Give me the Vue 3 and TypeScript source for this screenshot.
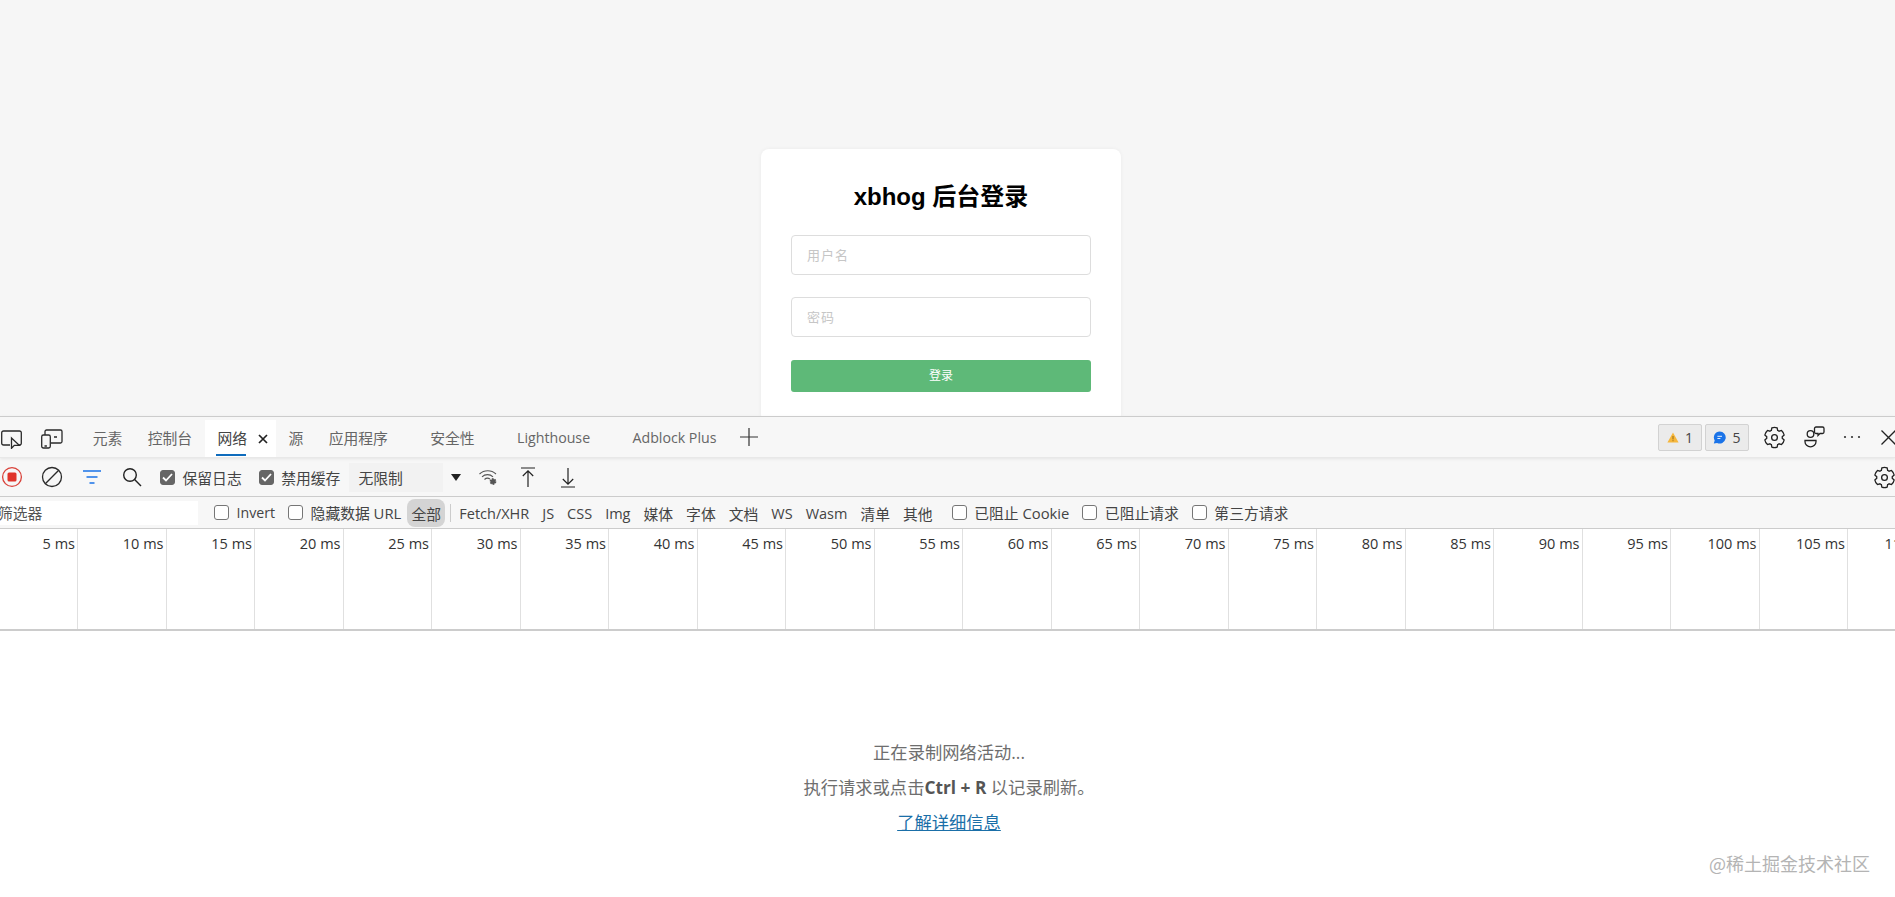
<script setup lang="ts">
const tabs = [
  { label: '元素' },
  { label: '控制台' },
  { label: '网络', active: true },
  { label: '源' },
  { label: '应用程序', spaced: true },
  { label: '安全性', spaced: true },
  { label: 'Lighthouse', spaced: true },
  { label: 'Adblock Plus' },
]
const chips = ['Fetch/XHR', 'JS', 'CSS', 'Img', '媒体', '字体', '文档', 'WS', 'Wasm', '清单', '其他']
const ticks = Array.from({ length: 22 }, (_, i) => `${(i + 1) * 5} ms`)
const isLatin = (s: string): boolean => /^[\x20-\x7e]+$/.test(s)

function gearPath(): string {
  const cx = 12, cy = 12, teeth = 6
  const pts: string[] = []
  for (let i = 0; i < teeth; i++) {
    const a = (i / teeth) * Math.PI * 2 - Math.PI / 2
    const step = (Math.PI * 2) / teeth
    const p = (r: number, o: number) => `${(cx + r * Math.cos(a + o)).toFixed(2)} ${(cy + r * Math.sin(a + o)).toFixed(2)}`
    pts.push(`${i === 0 ? 'M' : 'L'}${p(10.4, -0.27)}`)
    pts.push(`Q${p(11, 0)} ${p(10.4, 0.27)}`)
    pts.push(`L${p(8.1, 0.42)}`)
    pts.push(`Q${p(8.2, step / 2)} ${p(8.1, step - 0.42)}`)
  }
  return pts.join(' ') + ' Z'
}
const gear = gearPath()
</script>

<template>
  <div class="page">
    <section class="site">
      <div class="card">
        <h2 class="title">xbhog 后台登录</h2>
        <div class="fields">
          <input class="field" type="text" placeholder="用户名" />
          <input class="field" type="password" placeholder="密码" />
        </div>
        <button class="submit" type="button">登录</button>
      </div>
    </section>

    <section class="devtools">
      <header class="tabbar">
        <button class="slot" type="button" aria-label="检查">
          <svg width="24" height="24" viewBox="0 0 24 24" fill="none" stroke="#2a2a2a" stroke-width="1.3">
            <path d="M10 20H3.500A1.800 1.800 0 0 1 1.700 18.200V7.800A1.800 1.800 0 0 1 3.500 6h16a1.800 1.800 0 0 1 1.800 1.800v10.400a1.800 1.800 0 0 1-1.800 1.800H19" />
            <path d="M11.500 13v10.300l2.800-3h5z" fill="#f7f7f7" />
          </svg>
        </button>
        <button class="slot" type="button" aria-label="设备">
          <svg width="24" height="24" viewBox="0 0 24 24" fill="none" stroke="#2a2a2a" stroke-width="1.3">
            <path d="M5 10V6.500A1.500 1.500 0 0 1 6.500 5h14A1.500 1.500 0 0 1 22 6.500v10a1.500 1.500 0 0 1-1.500 1.500H11" />
            <rect x="1.700" y="10" width="8.600" height="13" rx="1.700" />
            <path d="M4.500 21h2.400M14 12h3" />
          </svg>
        </button>
        <nav class="tabs">
          <div v-for="t in tabs" :key="t.label" class="tab" :class="{ active: t.active, spaced: t.spaced, latin: isLatin(t.label) }">
            <span class="tab-label">{{ t.label }}</span>
            <svg v-if="t.active" class="tab-close" width="10" height="10" viewBox="0 0 10 10" stroke="#222" stroke-width="1.7">
              <path d="M1 1l8 8M9 1l-8 8" />
            </svg>
          </div>
          <svg class="plus" width="18" height="18" viewBox="0 0 18 18" stroke="#333" stroke-width="1.2">
            <path d="M9 0v18M0 9h18" />
          </svg>
        </nav>
        <div class="tab-right">
          <span class="badge">
            <svg width="12" height="11" viewBox="0 0 12 11"><path d="M6 .5l5.600 10H.4z" fill="#f6b73c" /><path d="M6 4v3.400M6 8.200v1" stroke="#8a6212" stroke-width=".9" /></svg>
            1
          </span>
          <span class="badge">
            <svg width="13" height="13" viewBox="0 0 13 13"><path d="M6.700.5a6 6 0 1 1-2.600 11.400L.8 12.600l.9-3A6 6 0 0 1 6.700.5z" fill="#1a73e8" /><path d="M4.400 5.300h4.600M4.400 7.500h3" stroke="#fff" stroke-width=".9" /></svg>
            5
          </span>
          <button class="slot" type="button" aria-label="设置">
            <svg width="23" height="23" viewBox="0 0 24 24" fill="none" stroke="#222" stroke-width="1.4"><path :d="gear" /><circle cx="12" cy="12" r="3" /></svg>
          </button>
          <button class="slot" type="button" aria-label="反馈">
            <svg width="22" height="22" viewBox="0 0 22 22" fill="none" stroke="#222" stroke-width="1.3">
              <circle cx="7.500" cy="8" r="3.300" />
              <path d="M2 14.500h11v1.300a5.500 5 0 0 1-11 0z" />
              <path d="M13 1h6.500A1.500 1.500 0 0 1 21 2.500v3.500A1.500 1.500 0 0 1 19.500 7.500h-2.500l-2 2v-2H13A1.500 1.500 0 0 1 11.500 6V2.500A1.500 1.500 0 0 1 13 1z" fill="#f7f7f7" />
            </svg>
          </button>
          <button class="slot narrow" type="button" aria-label="更多">
            <svg width="20" height="4" viewBox="0 0 20 4" fill="#333"><circle cx="3" cy="2" r="1.100" /><circle cx="10" cy="2" r="1.100" /><circle cx="17" cy="2" r="1.100" /></svg>
          </button>
          <button class="slot narrow" type="button" aria-label="关闭">
            <svg width="15" height="15" viewBox="0 0 15 15" stroke="#222" stroke-width="1.300"><path d="M.5.500l14 14M14.500.500l-14 14" /></svg>
          </button>
        </div>
      </header>

      <div class="toolbar">
        <button class="slot first" type="button" aria-label="录制">
          <svg width="22" height="22" viewBox="0 0 22 22" fill="none">
            <circle cx="11" cy="11" r="9.400" stroke="#d9423a" stroke-width="1.300" />
            <rect x="6.500" y="6.500" width="9" height="9" rx="1.500" fill="#e0342b" />
          </svg>
        </button>
        <button class="slot" type="button" aria-label="清除">
          <svg width="22" height="22" viewBox="0 0 22 22" fill="none" stroke="#2a2a2a" stroke-width="1.300">
            <circle cx="11" cy="11" r="9.500" /><path d="M4.300 17.700L17.700 4.300" />
          </svg>
        </button>
        <button class="slot" type="button" aria-label="筛选">
          <svg width="18" height="14" viewBox="0 0 18 14" stroke="#1a73e8" stroke-width="1.300"><path d="M0 1h18M3.500 7h11M6.500 13h5" /></svg>
        </button>
        <button class="slot" type="button" aria-label="搜索">
          <svg width="20" height="20" viewBox="0 0 20 20" fill="none" stroke="#222" stroke-width="1.400"><circle cx="8" cy="8" r="6.300" /><path d="M12.600 12.600L19 19" /></svg>
        </button>
        <label class="check lead">
          <span class="box on"><svg width="11" height="9" viewBox="0 0 11 9" fill="none" stroke="#fff" stroke-width="1.800"><path d="M1 4.500l3 3L10 1" /></svg></span>
          <span>保留日志</span>
        </label>
        <label class="check">
          <span class="box on"><svg width="11" height="9" viewBox="0 0 11 9" fill="none" stroke="#fff" stroke-width="1.800"><path d="M1 4.500l3 3L10 1" /></svg></span>
          <span>禁用缓存</span>
        </label>
        <div class="throttle">无限制</div>
        <span class="caret"></span>
        <button class="slot" type="button" aria-label="网络条件">
          <svg width="20" height="18" viewBox="0 0 20 18" fill="none" stroke="#555" stroke-width="1.100">
            <path d="M1.500 6a12 12 0 0 1 16.500 0M4 8.800a8 8 0 0 1 11 0M6.500 11.500a4.500 4.500 0 0 1 5.500-.5" />
            <circle cx="15" cy="13.500" r="2.500" fill="#555" stroke="#555" stroke-width="1.800" stroke-dasharray="1.600 1" />
          </svg>
        </button>
        <button class="slot" type="button" aria-label="导入">
          <svg width="16" height="21" viewBox="0 0 16 21" fill="none" stroke="#222" stroke-width="1.200"><path d="M1 1h14M8 20V4M2.800 9L8 3.800 13.200 9" /></svg>
        </button>
        <button class="slot" type="button" aria-label="导出">
          <svg width="16" height="21" viewBox="0 0 16 21" fill="none" stroke="#222" stroke-width="1.200"><path d="M1 20h14M8 1v16M2.800 12L8 17.200 13.200 12" /></svg>
        </button>
        <button class="slot end" type="button" aria-label="网络设置">
          <svg width="23" height="23" viewBox="0 0 24 24" fill="none" stroke="#222" stroke-width="1.400"><path :d="gear" /><circle cx="12" cy="12" r="3" /></svg>
        </button>
      </div>

      <div class="filters">
        <div class="filter-box">筛选器</div>
        <label class="check lead-f"><span class="box"></span><span class="latin">Invert</span></label>
        <label class="check"><span class="box"></span><span>隐藏数据 URL</span></label>
        <span class="pill">全部</span>
        <span class="sep"></span>
        <span v-for="c in chips" :key="c" class="chip" :class="{ latin: isLatin(c) }">{{ c }}</span>
        <label class="check lead-c"><span class="box"></span><span>已阻止 Cookie</span></label>
        <label class="check"><span class="box"></span><span>已阻止请求</span></label>
        <label class="check"><span class="box"></span><span>第三方请求</span></label>
      </div>

      <div class="timeline">
        <div v-for="t in ticks" :key="t" class="tick">{{ t }}</div>
      </div>

      <div class="empty">
        <p>正在录制网络活动...</p>
        <p>执行请求或点击<b>Ctrl + R</b> 以记录刷新。</p>
        <a class="more" href="#">了解详细信息</a>
      </div>
      <div class="watermark">@稀土掘金技术社区</div>
    </section>
  </div>
</template>

<style scoped>
.page {
  position: relative;
  width: 1895px;
  height: 897px;
  overflow: hidden;
  display: flex;
  flex-direction: column;
  background: #fff;
  font-family: "Open Sans", "Noto Sans CJK SC", sans-serif;
}
.site {
  box-sizing: border-box;
  flex: 0 0 416px;
  height: 416px;
  padding-right: 13px;
  overflow: hidden;
  background: #f6f6f6;
  display: flex;
  justify-content: center;
  align-items: flex-start;
}
.card {
  box-sizing: border-box;
  width: 360px;
  margin-top: 149px;
  padding: 30px;
  background: #fff;
  border-radius: 8px;
  box-shadow: 0 0 4px rgba(0, 0, 0, 0.05);
}
.title {
  margin: 0 0 20px;
  height: 36px;
  font: bold 24px/36px "Liberation Sans", "Noto Sans CJK SC", sans-serif;
  color: #000;
  text-align: center;
}
.fields {
  display: flex;
  flex-direction: column;
  gap: 22px;
}
.field {
  box-sizing: border-box;
  width: 300px;
  height: 40px;
  padding: 0 15px 2px;
  border: 1px solid #ddd;
  border-radius: 4px;
  background: #fff;
  font: 13px "Noto Sans CJK SC", sans-serif;
  letter-spacing: 1px;
  outline: none;
}
.field::placeholder {
  color: #c6c6c6;
}
.submit {
  display: block;
  width: 300px;
  height: 32px;
  margin-top: 23px;
  padding: 0 0 3px;
  border: 0;
  border-radius: 3px;
  background: #5eb978;
  color: #fff;
  font: 12px "Noto Sans CJK SC", sans-serif;
}

.devtools {
  flex: 1;
  display: flex;
  flex-direction: column;
  min-height: 0;
  font-size: 14.8px;
  color: #444;
}
.latin {
  font-size: 14.2px;
}
.slot {
  flex: 0 0 40px;
  width: 40px;
  height: 100%;
  padding: 0;
  border: 0;
  background: none;
  display: flex;
  align-items: center;
  justify-content: center;
}
.slot.narrow {
  flex-basis: 36px;
  width: 36px;
}
.tabbar {
  box-sizing: border-box;
  flex: 0 0 42px;
  display: flex;
  align-items: stretch;
  border-top: 1px solid #ccc;
  border-bottom: 1px solid #e8e8e8;
  background: #f7f7f7;
  box-shadow: 0 1px 3px rgba(0, 0, 0, 0.08);
  position: relative;
  z-index: 1;
}
.tabbar > .slot:first-child {
  margin-left: -8px;
}
.tabs {
  display: flex;
  align-items: stretch;
  margin-left: 8px;
}
.tab {
  position: relative;
  display: flex;
  align-items: center;
  padding: 0 12.7px;
  color: #666;
}
.tab.spaced {
  margin-right: 17px;
}
.tab.active {
  background: #fff;
  color: #444;
  margin: 3px 0 0;
}
.tab.active .tab-label {
  position: relative;
  align-self: stretch;
  display: flex;
  align-items: center;
  margin-top: -3px;
}
.tab.active .tab-label::after {
  content: "";
  position: absolute;
  left: -1px;
  right: 1px;
  bottom: 1px;
  height: 2px;
  background: #0f6cbd;
}
.tab-close {
  margin-left: 11px;
  margin-right: -5px;
}
.plus {
  align-self: center;
  margin-left: 11px;
}
.tab-right {
  margin-left: auto;
  margin-right: -11px;
  display: flex;
  align-items: center;
  height: 100%;
}
.badge {
  box-sizing: border-box;
  width: 44px;
  height: 27px;
  margin-right: 3px;
  display: flex;
  align-items: center;
  justify-content: center;
  gap: 6px;
  background: #ebebeb;
  border: 1px solid #d2d2d2;
  border-radius: 2px;
  color: #444;
  font-size: 14px;
}
.badge + .slot {
  margin-left: 2px;
}
.toolbar {
  box-sizing: border-box;
  flex: 0 0 39px;
  display: flex;
  align-items: center;
  background: #f7f7f7;
  border-bottom: 1px solid #ccc;
}
.toolbar .slot {
  height: 38px;
}
.slot.first {
  margin-left: -8px;
}
.slot.end {
  margin-left: auto;
  margin-right: -9px;
}
.check {
  display: flex;
  align-items: center;
  gap: 7.5px;
  margin-left: 17px;
  white-space: nowrap;
}
.check.lead {
  margin-left: 8px;
}
.box {
  box-sizing: border-box;
  flex: 0 0 15px;
  width: 15px;
  height: 15px;
  display: flex;
  align-items: center;
  justify-content: center;
  background: #fff;
  border: 1px solid #767676;
  border-radius: 3px;
}
.box.on {
  background: #666;
  border-color: #666;
}
.throttle {
  box-sizing: border-box;
  width: 94px;
  height: 29px;
  margin-left: 9px;
  padding-left: 9px;
  display: flex;
  align-items: center;
  background: #f2f2f2;
}
.caret {
  margin: 0 7px 0 8px;
  border-style: solid;
  border-width: 7px 5px 0;
  border-color: #222 transparent transparent;
}
.filters {
  box-sizing: border-box;
  flex: 0 0 32px;
  display: flex;
  align-items: center;
  background: #f7f7f7;
  border-bottom: 1px solid #ccc;
}
.filter-box {
  box-sizing: border-box;
  flex: 0 0 198px;
  height: 24px;
  line-height: 24px;
  background: #fff;
  text-indent: -2px;
  overflow: hidden;
  color: #555;
}
.filters .check {
  margin-left: 13px;
}
.filters .check.lead-f {
  margin-left: 16px;
}
.filters .check.lead-c {
  margin-left: 19px;
}
.pill {
  box-sizing: border-box;
  flex: 0 0 38px;
  height: 28px;
  margin-left: 6px;
  display: flex;
  align-items: center;
  justify-content: center;
  padding-top: 2px;
  background: #d4d4d4;
  border-radius: 8px;
}
.sep {
  width: 1px;
  height: 18px;
  margin: 0 8px 0 5px;
  background: #ccc;
}
.chip {
  margin-right: 13px;
  padding-top: 2px;
  white-space: nowrap;
}
.chip.latin {
  font-size: 14.5px;
}
.chip:last-of-type {
  margin-right: 0;
}
.timeline {
  box-sizing: border-box;
  flex: 0 0 102px;
  display: flex;
  margin-left: -10.5px;
  border-bottom: 2px solid #ccc;
  background: #fff;
}
.tick {
  box-sizing: border-box;
  flex: 0 0 88.5px;
  padding: 5px 2px 0 0;
  border-right: 1px solid #e0e0e0;
  text-align: right;
  font-size: 14.5px;
  color: #333;
  white-space: nowrap;
}
.empty {
  flex: 1;
  display: flex;
  flex-direction: column;
  align-items: center;
  padding: 104px 0 0 3px;
  font-size: 17.3px;
  line-height: 35px;
  color: #6e6e6e;
}
.empty p {
  margin: 0;
}
.empty b {
  color: #555;
}
.more {
  color: #1a6fa8;
  text-decoration: underline;
}
.watermark {
  position: absolute;
  right: 25px;
  bottom: 22px;
  font: 18px/24px "Noto Sans CJK SC", sans-serif;
  color: #b4b4b4;
}
</style>

<style>
html, body {
  margin: 0;
  overflow: hidden;
}
</style>
